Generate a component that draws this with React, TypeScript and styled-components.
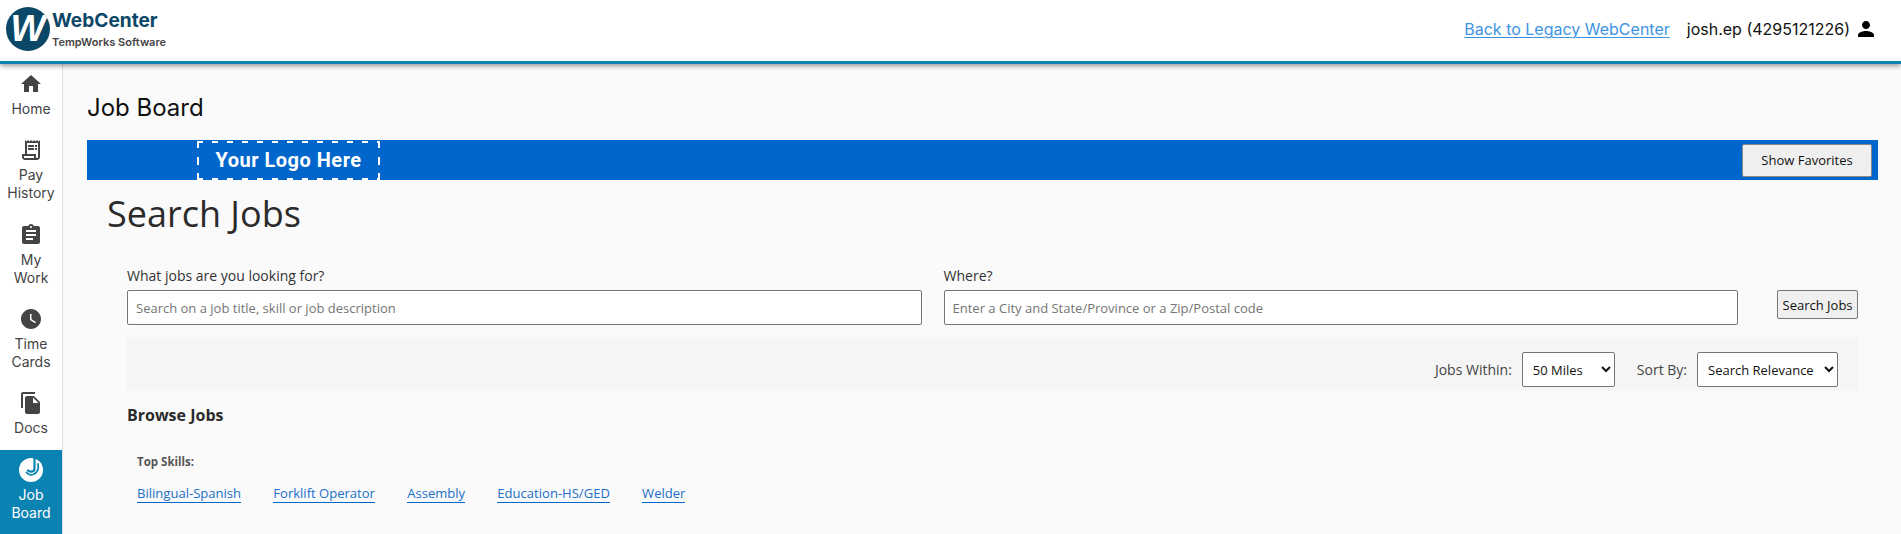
import { createGlobalStyle, styled } from 'styled-components';
import {
  MdAssignment,
  MdFileCopy,
  MdHome,
  MdOutlineReceiptLong,
  MdPerson,
  MdWatchLater,
} from 'react-icons/md';

const GlobalStyle = createGlobalStyle`
  html, body {
    margin: 0;
    height: 100%;
    overflow: hidden;
    background: #fafafa;
  }
`;

const Page = styled.div`
  display: flex;
  flex-direction: column;
  height: 534px;
  font-family: Inter, sans-serif;
`;

const Header = styled.header`
  display: flex;
  position: relative;
  z-index: 1;
  flex: none;
  height: 58px;
  padding: 0 23px 3px 6px;
  align-items: center;
  justify-content: space-between;
  background: #fff;
  border-bottom: 3px solid #0a83b2;
  box-shadow: 0 2px 5px rgba(0, 0, 0, 0.4);
`;

const Brand = styled.div`
  display: flex;
  align-items: center;
`;

const BrandMark = styled.div`
  display: flex;
  flex: none;
  width: 44px;
  height: 44px;
  border-radius: 50%;
  background: #0b4766;
  align-items: center;
  justify-content: center;
  overflow: hidden;
  color: #fff;
  font: italic 700 37px/44px 'Liberation Sans', sans-serif;
`;

const BrandText = styled.div`
  display: flex;
  flex-direction: column;
  margin-left: 2px;
`;

const BrandName = styled.div`
  margin-top: -1px;
  font-size: 19.1px;
  font-weight: 700;
  line-height: 24px;
  color: #0b4766;
`;

const BrandSub = styled.div`
  margin-top: 3px;
  font-size: 11px;
  font-weight: 600;
  line-height: 14px;
  color: #444;
`;

const HeaderRight = styled.div`
  display: flex;
  align-items: center;
  font-size: 16px;
`;

const LegacyLink = styled.a`
  color: #3d94e2;
  text-decoration: underline;
  text-underline-offset: 2px;
  text-decoration-thickness: 1px;
  margin-right: 17px;
`;

const UserName = styled.span`
  color: #111;
  margin-right: 4px;
`;

const Body = styled.div`
  display: flex;
  flex: 1;
  min-height: 0;
`;

const Sidebar = styled.nav`
  display: flex;
  flex: none;
  flex-direction: column;
  width: 62px;
  background: #fff;
  border-right: 1px solid #ddd;
`;

const NavItem = styled.a<{ $active?: boolean }>`
  display: flex;
  flex-direction: column;
  align-items: center;
  gap: 4px;
  padding: 8px 8px 12.3px;
  margin-top: ${p => (p.$active ? '0.5px' : '0')};
  flex: ${p => (p.$active ? '1' : 'none')};
  background: ${p => (p.$active ? '#0a83b2' : 'transparent')};
  color: ${p => (p.$active ? '#fff' : '#444')};
  font-size: 14px;
  line-height: 18px;
  text-align: center;
  svg {
    display: block;
    flex: none;
  }
`;

const Main = styled.main`
  flex: 1;
  min-width: 0;
  padding: 29px 23px 0 24px;
`;

const PageTitle = styled.h1`
  margin: 0 0 17px;
  font-size: 24px;
  font-weight: 400;
  line-height: 30px;
  color: #111;
`;

const Banner = styled.div`
  display: flex;
  height: 40px;
  padding: 0 6px 0 110px;
  align-items: center;
  justify-content: space-between;
  background: #0066cc;
`;

const LogoPlaceholder = styled.div`
  display: flex;
  box-sizing: border-box;
  width: 183px;
  height: 39px;
  align-items: center;
  justify-content: center;
  color: #fff;
  font: 700 20px Roboto, sans-serif;
  letter-spacing: 0.5px;
  background:
    repeating-linear-gradient(90deg, #fff 0 6px, transparent 6px 15px) 0 0 / 100% 2px no-repeat,
    repeating-linear-gradient(90deg, #fff 0 6px, transparent 6px 15px) 0 100% / 100% 2px no-repeat,
    linear-gradient(#fff 0 7px, transparent 7px 16px, #fff 16px 24px, transparent 24px 32px, #fff 32px) 0 0 / 2px 100% no-repeat,
    linear-gradient(#fff 0 7px, transparent 7px 16px, #fff 16px 24px, transparent 24px 32px, #fff 32px) 100% 0 / 2px 100% no-repeat;
`;

const FavoritesButton = styled.button`
  width: 130px;
  height: 33px;
  border: 1px solid #888;
  border-radius: 2px;
  background: #efefef;
  color: #111;
  font: 13px 'Open Sans', sans-serif;
`;

const SearchSection = styled.section`
  padding: 0 20px;
  font-family: 'Open Sans', sans-serif;
  color: #333;
`;

const SearchTitle = styled.h2`
  margin: 9px 0 27px;
  font-size: 36px;
  font-weight: 400;
  line-height: 50px;
  color: #2b2b2b;
`;

const SearchBody = styled.div`
  padding-left: 20px;
`;

const SearchRow = styled.div`
  display: flex;
  align-items: flex-end;
`;

const Field = styled.label`
  display: flex;
  flex-direction: column;
  width: 795px;
  margin-right: 22px;
  font-size: 14px;
  line-height: 19px;
`;

const SearchInput = styled.input`
  box-sizing: border-box;
  height: 35px;
  margin-top: 5px;
  padding: 0 8px;
  border: 1px solid #767676;
  border-radius: 2px;
  background: #fff;
  font: 13px 'Open Sans', sans-serif;
  &::placeholder {
    color: #757575;
    opacity: 1;
  }
`;

const SearchButton = styled.button`
  width: 81px;
  height: 29px;
  margin: 0 0 6px 17px;
  padding: 0;
  border: 1px solid #767676;
  border-radius: 2px;
  background: #efefef;
  color: #111;
  font: 13px 'Open Sans', sans-serif;
`;

const FilterBar = styled.div`
  display: flex;
  box-sizing: border-box;
  height: 54px;
  margin-top: 12px;
  padding: 11px 20px 0 0;
  align-items: center;
  justify-content: flex-end;
  background: #f5f5f5;
  font-size: 14px;
`;

const FilterLabel = styled.span`
  margin-right: 10px;
  color: #444;
`;

const FilterSelect = styled.select<{ $wide?: boolean }>`
  box-sizing: border-box;
  width: ${p => (p.$wide ? '141px' : '93px')};
  height: 35px;
  margin-right: ${p => (p.$wide ? '0' : '22px')};
  padding: 0 6px;
  border: 1px solid #767676;
  border-radius: 2px;
  background: #fff;
  color: #111;
  font: 13px 'Open Sans', sans-serif;
`;

const BrowseTitle = styled.h3`
  margin: 13px 0 0;
  font-size: 16px;
  font-weight: 700;
  line-height: 22px;
  color: #2b2b2b;
`;

const SkillsBlock = styled.div`
  padding: 28px 0 0 10px;
`;

const SkillsLabel = styled.div`
  font-size: 11.5px;
  font-weight: 700;
  line-height: 16px;
  color: #555;
`;

const SkillsRow = styled.div`
  display: flex;
  gap: 32.25px;
  margin-top: 14px;
`;

const SkillLink = styled.a`
  color: #1a6fc9;
  font-size: 13.06px;
  line-height: 18px;
  border-bottom: 1px solid #0066cc;
`;

const NAV_ITEMS = [
  { icon: <MdHome size={24} />, label: 'Home' },
  { icon: <MdOutlineReceiptLong size={24} />, label: 'Pay History' },
  { icon: <MdAssignment size={24} />, label: 'My Work' },
  { icon: <MdWatchLater size={24} />, label: 'Time Cards' },
  { icon: <MdFileCopy size={24} />, label: 'Docs' },
];

const SKILLS = [
  'Bilingual-Spanish',
  'Forklift Operator',
  'Assembly',
  'Education-HS/GED',
  'Welder',
];

const JobBoardIcon = () => (
  <svg width="24" height="24" viewBox="0 0 24 24">
    <circle cx="12" cy="12" r="12" fill="#fff" />
    <path
      fill="none"
      stroke="#0a83b2"
      strokeWidth="2.2"
      strokeLinecap="round"
      d="M15.500 0.500V11c0 2.500-3.500 3.500-6.500 1.500"
    />
    <path
      fill="none"
      stroke="#0a83b2"
      strokeWidth="1.8"
      strokeLinecap="round"
      d="M19 6c1 5-1 9-5 10.500c-2.500.7-5 0-6.500-2"
    />
  </svg>
);

export default function App() {
  return (
    <Page>
      <GlobalStyle />
      <Header>
        <Brand>
          <BrandMark>W</BrandMark>
          <BrandText>
            <BrandName>WebCenter</BrandName>
            <BrandSub>TempWorks Software</BrandSub>
          </BrandText>
        </Brand>
        <HeaderRight>
          <LegacyLink>Back to Legacy WebCenter</LegacyLink>
          <UserName>josh.ep (4295121226)</UserName>
          <MdPerson size={24} color="#000" />
        </HeaderRight>
      </Header>
      <Body>
        <Sidebar>
          {NAV_ITEMS.map(item => (
            <NavItem key={item.label}>
              {item.icon}
              <span>{item.label}</span>
            </NavItem>
          ))}
          <NavItem $active>
            <JobBoardIcon />
            <span>Job Board</span>
          </NavItem>
        </Sidebar>
        <Main>
          <PageTitle>Job Board</PageTitle>
          <Banner>
            <LogoPlaceholder>Your Logo Here</LogoPlaceholder>
            <FavoritesButton>Show Favorites</FavoritesButton>
          </Banner>
          <SearchSection>
            <SearchTitle>Search Jobs</SearchTitle>
            <SearchBody>
              <SearchRow>
                <Field>
                  What jobs are you looking for?
                  <SearchInput placeholder="Search on a job title, skill or job description" />
                </Field>
                <Field>
                  Where?
                  <SearchInput placeholder="Enter a City and State/Province or a Zip/Postal code" />
                </Field>
                <SearchButton>Search Jobs</SearchButton>
              </SearchRow>
              <FilterBar>
                <FilterLabel>Jobs Within:</FilterLabel>
                <FilterSelect defaultValue="50">
                  <option value="50">50 Miles</option>
                </FilterSelect>
                <FilterLabel>Sort By:</FilterLabel>
                <FilterSelect $wide defaultValue="relevance">
                  <option value="relevance">Search Relevance</option>
                </FilterSelect>
              </FilterBar>
              <BrowseTitle>Browse Jobs</BrowseTitle>
              <SkillsBlock>
                <SkillsLabel>Top Skills:</SkillsLabel>
                <SkillsRow>
                  {SKILLS.map(skill => (
                    <SkillLink key={skill}>{skill}</SkillLink>
                  ))}
                </SkillsRow>
              </SkillsBlock>
            </SearchBody>
          </SearchSection>
        </Main>
      </Body>
    </Page>
  );
}
